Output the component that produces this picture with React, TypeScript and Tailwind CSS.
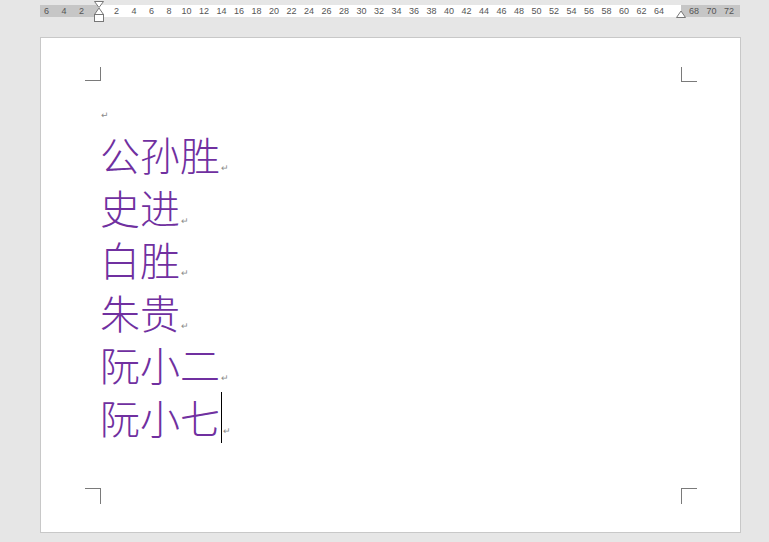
const ticks = [
  "6", "4", "2", "",
  ...Array.from({ length: 32 }, (_, i) => String((i + 1) * 2)),
  "", "68", "70", "72",
];

const lines = ["公孙胜", "史进", "白胜", "朱贵", "阮小二", "阮小七"];

function Mark() {
  return (
    <span className="inline-block align-baseline text-[9px] leading-none text-[#8a8a8a] ml-[1px] font-['DejaVu_Sans',sans-serif]">
      ↵
    </span>
  );
}

function Ruler() {
  return (
    <div className="relative ml-[40px] w-[700px] h-[12px] mt-[5px]">
      <div className="flex h-full">
        <div className="w-[58px] bg-[#c6c6c6]" />
        <div className="w-[583px] bg-white" />
        <div className="flex-1 bg-[#c6c6c6]" />
      </div>
      <div className="absolute inset-0 -ml-[2.25px] flex items-center text-[9px] leading-none text-[#555] font-['Liberation_Sans',Arial,sans-serif]">
        {ticks.map((t, i) => (
          <div key={i} className="w-[17.5px] shrink-0 text-center">
            {t}
          </div>
        ))}
      </div>
      {/* indent markers */}
      <svg className="absolute left-[53px] -top-[4px]" width="12" height="24" viewBox="0 0 12 24">
        <path d="M1.5 0.5 H10.5 L6 6.5 Z" fill="white" stroke="#777" strokeWidth="1" />
        <path d="M6 7 L10.5 13.5 H1.5 Z" fill="white" stroke="#777" strokeWidth="1" />
        <rect x="1.5" y="13.5" width="9" height="7" fill="white" stroke="#777" strokeWidth="1" />
      </svg>
      <svg className="absolute left-[635px] top-[5px]" width="12" height="9" viewBox="0 0 12 9">
        <path d="M6 1 L10.5 7.5 H1.5 Z" fill="white" stroke="#777" strokeWidth="1" />
      </svg>
    </div>
  );
}

export default function App() {
  return (
    <div className="w-[769px] h-[542px] bg-[#e6e6e6] overflow-hidden flex flex-col">
      <Ruler />
      <div className="ml-[40px] mt-[20px] w-[701px] h-[496px] bg-white border border-[#c8c8c8] flex flex-col pl-[44px] pr-[43px] pt-[29px] pb-[28px]">
        {/* top corner marks */}
        <div className="flex justify-between">
          <div className="w-[16px] h-[14px] border-r border-b border-[#7a7a7a]" />
          <div className="w-[16px] h-[15px] border-l border-b border-[#7a7a7a]" />
        </div>

        <div className="pl-[15px] flex flex-col font-['Noto_Sans_CJK_SC',sans-serif] text-[#7030a0]">
          <div className="h-[46px] pt-[21px] leading-none">
            <Mark />
          </div>
          {lines.map((l, i) => (
            <div key={l} className="h-[52.5px] text-[40px] leading-[52.5px] font-light whitespace-nowrap">
              {l}
              {i === lines.length - 1 && (
                <span className="inline-block w-px h-[51px] bg-black align-top ml-[1px] mt-[1px]" />
              )}
              <Mark />
            </div>
          ))}
        </div>

        <div className="flex-1" />

        {/* bottom corner marks */}
        <div className="flex justify-between">
          <div className="w-[16px] h-[16px] border-r border-t border-[#7a7a7a]" />
          <div className="w-[16px] h-[16px] border-l border-t border-[#7a7a7a]" />
        </div>
      </div>
    </div>
  );
}
